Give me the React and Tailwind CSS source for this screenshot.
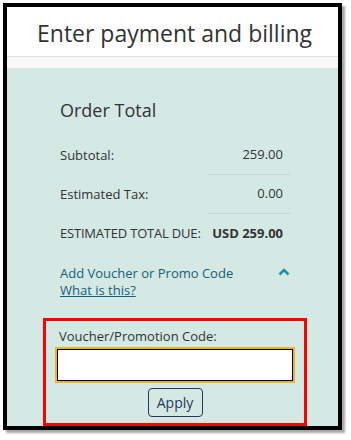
import React, { useState } from "react";

const rows = [
  { label: "Subtotal:", value: "259.00" },
  { label: "Estimated Tax:", value: "0.00" },
];

export default function App() {
  const [code, setCode] = useState("");

  return (
    <div
      className="w-[351px] h-[440px] bg-white pl-[3px] pt-[3px]"
      style={{ fontFamily: '"Open Sans", sans-serif' }}
    >
      <div className="w-[339px] h-[427px] border-[4px] border-black shadow-[3px_3px_2px_rgba(0,0,0,0.35)] flex flex-col">
        {/* header */}
        <div className="h-[54px] bg-white flex items-center pl-[30px] border-b border-[#dedede]">
          <h1 className="text-[23px] text-[#333] pt-[4px]">
            Enter payment and billing
          </h1>
        </div>
        <div className="h-[12px] bg-[#f8f8f8]" />

        {/* order total */}
        <div className="flex-1 bg-[#d4e9e3] pl-[53px] pr-[48px] pt-[29px]">
          <h2 className="text-[18px] text-[#333] leading-[26px]">Order Total</h2>

          <div className="mt-[13px] text-[13px] text-[#333]">
            {rows.map((row) => (
              <div key={row.label} className="flex h-[39px]">
                <div className="flex-1 flex items-center">{row.label}</div>
                <div className="w-[82px] flex items-center justify-end pr-[7px] border-b border-[#c3d8d2]">
                  {row.value}
                </div>
              </div>
            ))}
            <div className="flex h-[39px] items-center">
              <div className="flex-1 tracking-[-0.2px]">ESTIMATED TOTAL DUE:</div>
              <div className="pr-[7px] font-bold">USD 259.00</div>
            </div>
          </div>

          <div className="mt-[12px] flex justify-between items-start text-[13px]">
            <div className="leading-[17px]">
              <div className="text-[#14607a]">Add Voucher or Promo Code</div>
              <a href="#" className="text-[#14607a] underline">
                What is this?
              </a>
            </div>
            <svg width="12" height="8" viewBox="0 0 12 8" className="mt-[3px]">
              <path
                d="M1.5 6.5 L6 2 L10.5 6.5"
                fill="none"
                stroke="#1b8fb3"
                strokeWidth="2.5"
              />
            </svg>
          </div>

          {/* voucher box */}
          <div className="mt-[19px] -ml-[17px] w-[264px] border-[3px] border-[#ff0000] px-[11px] pt-[6px] pb-[6px] flex flex-col">
            <label className="text-[13px] text-[#333] leading-[18px] ml-[2px]">
              Voucher/Promotion Code:
            </label>
            <input
              type="text"
              value={code}
              onChange={(e) => setCode(e.target.value)}
              className="mt-[4px] h-[32px] w-full bg-white border border-black ring-2 ring-[#f0b31c]"
            />
            <button
              type="button"
              className="mt-[7px] self-center w-[55px] h-[29px] border border-[#1f3a5c] rounded-[4px] text-[14px] text-[#1f3a5c]"
            >
              Apply
            </button>
          </div>
        </div>
      </div>
    </div>
  );
}
